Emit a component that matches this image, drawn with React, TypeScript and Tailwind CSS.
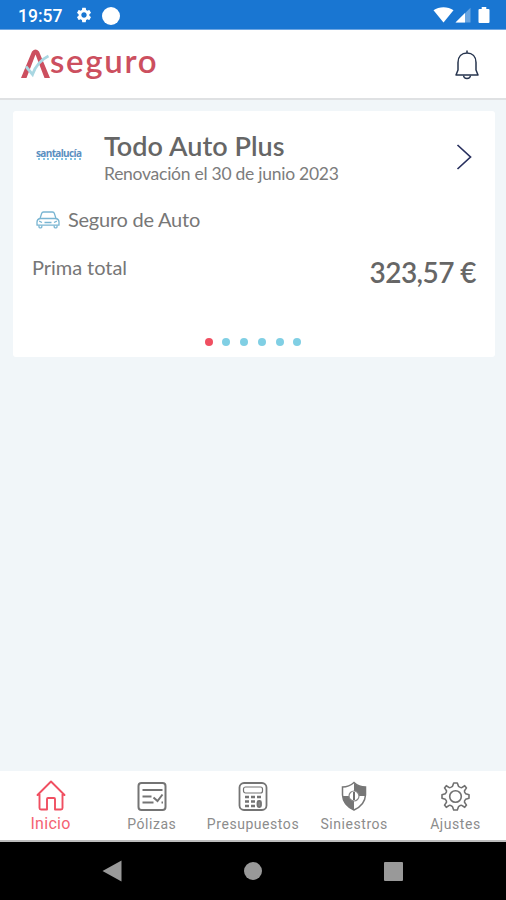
import type { ReactNode } from 'react';
import { MdSettings } from 'react-icons/md';

function StatusBar() {
  return (
    <div className="flex h-[30px] shrink-0 items-center border-b border-[#6ea6e2] bg-[#1976d2] pl-[18px] pr-4 text-white">
      <span className="w-[45px] whitespace-nowrap pt-[2px] font-['Roboto',sans-serif] text-[17.5px] font-medium leading-[30px]">19:57</span>
      <MdSettings className="ml-[12px] size-[18px]" />
      <span className="ml-[9px] mt-[2px] size-[18px] rounded-full bg-white" />
      <svg className="ml-auto mt-px h-[16px] w-[57px]" viewBox="0 0 56 16">
        <path d="M0 3.200C5.500-.8 14.500-.8 20 3.200L10 15.500Z" fill="#fff" />
        <path d="M22 15.500 37 .8V15.500Z" fill="#fff" fillOpacity=".35" />
        <path d="M22 15.500 31.500 6V15.500Z" fill="#fff" />
        <path d="M46 2h2.200V0h4.600v2H55q1 0 1 1v12q0 1-1 1h-9q-1 0-1-1V3q0-1 1-1Z" fill="#fff" />
      </svg>
    </div>
  );
}

function Header() {
  return (
    <header className="flex h-[70px] shrink-0 items-start justify-between border-b-2 border-[#dfe1e3] bg-white pl-[21px] pr-[26px]">
      <div className="flex items-start">
        <svg className="mt-[18px] h-[32px] w-[29px]" viewBox="0 0 29 32" fill="none">
          <path d="M0 30 11 3.500Q14.500-.5 18 3.500L29 30H23.500L14.500 6.500 5.500 30Z" fill="#cc4f5f" />
          <path d="M5 18.500 11.500 26.500Q16 13.500 27.500 8" stroke="#a9d7e2" strokeWidth="2.800" />
        </svg>
        <span className="mt-[8px] font-['Lato',sans-serif] text-[33px] font-semibold leading-[44px] tracking-[1.700px] text-[#cc4f5f]">seguro</span>
      </div>
      <svg className="mt-[20px] h-[30px] w-[26px]" viewBox="0 0 26 30" fill="none" stroke="#26344e" strokeWidth="1.500" strokeLinejoin="round">
        <path d="M13 .5V3M4 20V12.500C4 6.500 7.700 3 13 3s9 3.500 9 9.500V20l2 5H2Z" />
        <path d="M9.500 25.500c.3 4 6.700 4 7 0" strokeWidth="1.300" />
      </svg>
    </header>
  );
}

function CarIcon() {
  return (
    <svg className="h-[18px] w-[24px]" viewBox="0 0 24 18" fill="none" stroke="#79b5d2" strokeWidth="1.300" strokeLinejoin="round">
      <path d="M4 7.500 5.800 2Q6 1 7.500 1h9Q18 1 18.200 2L20 7.500Q23 8.300 23 11v3.200H1V11Q1 8.300 4 7.500Z" />
      <path d="M4 7.500H20M8.500 11.500h7M3 14.500V16q0 .8.800.8H5q.8 0 .8-.8V14.500M18.200 14.500V16q0 .8.800.8h1.200q.8 0 .8-.8V14.500" />
      <path d="M3.200 10.200 6 11.500M20.800 10.200 18 11.500" />
    </svg>
  );
}

const dots = ['bg-[#f04f61]', 'bg-[#80cfe4]', 'bg-[#80cfe4]', 'bg-[#80cfe4]', 'bg-[#80cfe4]', 'bg-[#80cfe4]'];

function PolicyCard() {
  return (
    <section className="ml-[13px] mt-[11px] flex h-[246px] w-[482px] flex-col rounded-[3px] bg-white font-['Lato',sans-serif] text-[#666]">
      <div className="flex h-[84px] px-[23px] pt-[18px]">
        <div className="mt-[19px] w-[68px]">
          <div className="h-[10px] whitespace-nowrap font-['Open_Sans',sans-serif] text-[10px] font-bold leading-[10px] tracking-[-0.650px] text-[#5b8fc1]">santalucía</div>
          <div className="flex w-[45px] justify-between pl-[2px]">
            {[0, 1, 2, 3, 4, 5, 6, 7, 8, 9].map((n) => (
              <span key={n} className="h-[2px] w-[2px] bg-[#83c4e4]" />
            ))}
          </div>
        </div>
        <div className="whitespace-nowrap">
          <h1 className="h-[35px] text-[27px] font-semibold leading-[34px] tracking-[0.050px]">Todo Auto Plus</h1>
          <p className="text-[17.500px] leading-[20px] tracking-[-0.260px] text-[#7c7c7c]">Renovación el 30 de junio 2023</p>
        </div>
        <svg className="ml-auto mt-[15px] h-[26px] w-[16px]" viewBox="0 0 16 26" fill="none" stroke="#28305e" strokeWidth="1.700">
          <path d="M1.500 1 14.500 13 1.500 25" />
        </svg>
      </div>
      <div className="flex h-[50px] items-center gap-[8px] pl-[23px] text-[20px] leading-[30px] tracking-[-0.240px] text-[#777]">
        <CarIcon />
        <span className="-mt-[2px]">Seguro de Auto</span>
      </div>
      <div className="flex h-[54px] justify-between pl-[19px] pr-[19px]">
        <span className="text-[20px] leading-[44px] tracking-[-0.050px] text-[#777]">Prima total</span>
        <span className="text-[28px] font-semibold leading-[55px] tracking-[-0.550px]">323,57 €</span>
      </div>
      <div className="mt-[39px] flex justify-center gap-[9.800px] pr-[2px]">
        {dots.map((color, i) => (
          <span key={i} className={`size-[8px] rounded-full ${color}`} />
        ))}
      </div>
    </section>
  );
}

function HomeIcon() {
  return (
    <svg className="h-[32px] w-[32px]" viewBox="0 0 32 32" fill="none" stroke="#f04f61" strokeWidth="1.900" strokeLinejoin="round" strokeLinecap="round">
      <path d="M2.500 16 16 2.500 29.500 16M4.500 15v14q0 1.500 1.500 1.500h6V20q0-1 1-1h6q1 0 1 1v10.500h6q1.500 0 1.500-1.500V15" />
    </svg>
  );
}

function PolicyIcon() {
  return (
    <svg className="size-[32px]" viewBox="0 0 32 32" fill="none" stroke="#747474" strokeWidth="2">
      <rect x="2.500" y="4" width="27" height="27" rx="3" />
      <path d="M6.500 11h20M6.500 17.500h9M6.500 23.500h11M17.500 18.500l4 3.500L26.500 15.500M25.500 23.500h1.500" />
    </svg>
  );
}

function CalculatorIcon() {
  return (
    <svg className="size-[32px]" viewBox="0 0 32 32" fill="none" stroke="#747474" strokeWidth="1.800">
      <rect x="2.500" y="4" width="27" height="27" rx="4.500" />
      <rect x="6.500" y="8" width="19" height="6" rx="2" strokeWidth="1.200" />
      <path d="M8 18h4M14 18h4M20 18h4M8 22.500h4M14 22.500h4M8 27h4M14 27h4" strokeWidth="2.600" />
      <rect x="20.500" y="22" width="3.500" height="6" rx="1.500" fill="#888" />
    </svg>
  );
}

function ShieldIcon() {
  return (
    <svg className="size-[32px]" viewBox="0 0 32 32">
      <path d="M16 3.500Q21 8 27.500 8V16Q27 26 16 31Q5 26 4.500 16V8Q11 8 16 3.500Z" fill="#fff" stroke="#767676" strokeWidth="1.500" />
      <path d="M16 4Q21 8 27.500 8V17H16ZM4.500 17H16V31Q5.500 27 4.500 17Z" fill="#767676" />
      <circle cx="16" cy="17" r="5" fill="#fff" stroke="#858585" strokeWidth="1.200" />
      <path d="M16 13v8" stroke="#707070" strokeWidth="2" />
    </svg>
  );
}

function GearIcon() {
  return (
    <svg className="size-[32px]" viewBox="-16.500 -17.500 32 32" fill="none" stroke="#707070" strokeWidth="1.600" strokeLinejoin="round">
      <path d="M-1.800-13.500H1.800L3-10.200Q5.500-8.500 6.200-8.900L9.200-10.800 11-8.600 9-5.800Q8.600-4.500 10.200-2.800L13.500-1.800V1.800L10.200 2.800Q8.600 4.500 9 5.800L11 8.600 9.200 10.800 6.200 8.900Q5.500 8.500 3 10.200L1.800 13.500H-1.800L-3 10.200Q-5.500 8.500-6.200 8.900L-9.200 10.800-11 8.600-9 5.800Q-8.600 4.500-10.200 2.800L-13.500 1.800V-1.800L-10.200-2.800Q-8.600-4.500-9-5.800L-11-8.600-9.200-10.800-6.200-8.900Q-5.500-8.500-3-10.200Z" />
      <circle r="5.800" />
    </svg>
  );
}

function Tab({ icon, label, active = false }: { icon: ReactNode; label: string; active?: boolean }) {
  return (
    <div className="flex flex-1 flex-col items-center">
      <div className="mt-[8px] h-[32px]">{icon}</div>
      <span
        className={
          active
            ? "whitespace-nowrap font-['Roboto',sans-serif] text-[16px] leading-[26px] tracking-[0.300px] text-[#f46272]"
            : "whitespace-nowrap font-['Roboto',sans-serif] text-[14px] leading-[27px] tracking-[0.550px] text-[#8c8c8c]"
        }
      >
        {label}
      </span>
    </div>
  );
}

export default function App() {
  return (
    <main className="flex h-[900px] w-[506px] flex-col overflow-hidden bg-[#f1f6f9]">
      <StatusBar />
      <Header />
      <PolicyCard />
      <nav className="mt-auto flex h-[71px] shrink-0 border-b-2 border-[#bdbdbd] bg-white">
        <Tab icon={<HomeIcon />} label="Inicio" active />
        <Tab icon={<PolicyIcon />} label="Pólizas" />
        <Tab icon={<CalculatorIcon />} label="Presupuestos" />
        <Tab icon={<ShieldIcon />} label="Siniestros" />
        <Tab icon={<GearIcon />} label="Ajustes" />
      </nav>
      <div className="flex h-[58px] shrink-0 items-center bg-black pl-[102px]">
        <svg className="h-[22px] w-[20px]" viewBox="0 0 20 22"><path d="M.5 11 19.500.5V21.500Z" fill="#999" /></svg>
        <span className="ml-[122px] size-[18px] rounded-full bg-[#999]" />
        <span className="ml-[122px] size-[19px] rounded-[1px] bg-[#999]" />
      </div>
    </main>
  );
}
